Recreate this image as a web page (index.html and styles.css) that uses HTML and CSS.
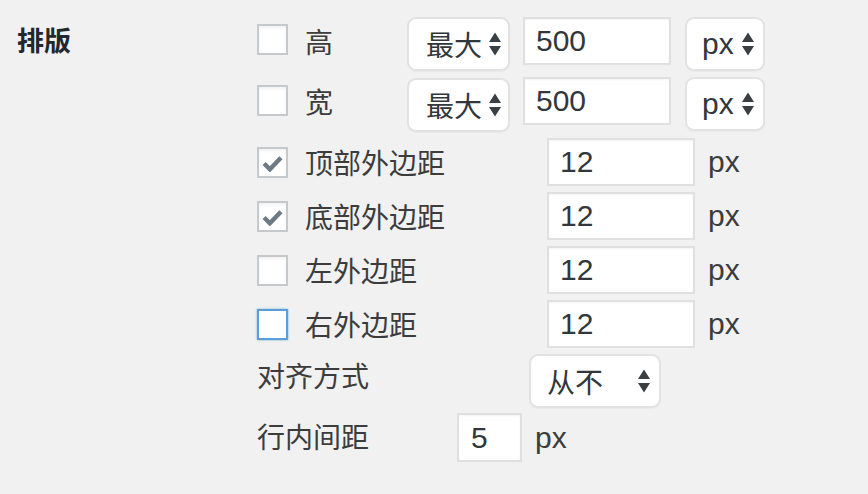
FILE: index.html
```html
<!DOCTYPE html>
<html lang="zh">
<head>
<meta charset="utf-8">
<link rel="stylesheet" href="styles.css">
</head>
<body>
<div class="section">
  <div class="heading">排版</div>
  <div class="fields">
    <div class="row row-size">
      <span class="cb"></span>
      <span class="label label-short">高</span>
      <span class="select select-max">最大<svg class="arrows" viewBox="0 0 12 24"><path d="M6 0.5 L12 10 L0 10 Z M0 14 L12 14 L6 23.5 Z"/></svg></span>
      <span class="input input-wide">500</span>
      <span class="select select-unit"><span class="latin">px</span><svg class="arrows" viewBox="0 0 12 24"><path d="M6 0.5 L12 10 L0 10 Z M0 14 L12 14 L6 23.5 Z"/></svg></span>
    </div>
    <div class="row row-size row-size2">
      <span class="cb"></span>
      <span class="label label-short">宽</span>
      <span class="select select-max">最大<svg class="arrows" viewBox="0 0 12 24"><path d="M6 0.5 L12 10 L0 10 Z M0 14 L12 14 L6 23.5 Z"/></svg></span>
      <span class="input input-wide">500</span>
      <span class="select select-unit"><span class="latin">px</span><svg class="arrows" viewBox="0 0 12 24"><path d="M6 0.5 L12 10 L0 10 Z M0 14 L12 14 L6 23.5 Z"/></svg></span>
    </div>
    <div class="row row-margin row-first-margin">
      <span class="cb checked"><svg class="tick" viewBox="0 0 20 16"><path d="M2 8 L7.5 13.5 L18 2.5"/></svg></span>
      <span class="label label-long">顶部外边距</span>
      <span class="input input-wide">12</span>
      <span class="unit">px</span>
    </div>
    <div class="row row-margin">
      <span class="cb checked"><svg class="tick" viewBox="0 0 20 16"><path d="M2 8 L7.5 13.5 L18 2.5"/></svg></span>
      <span class="label label-long">底部外边距</span>
      <span class="input input-wide">12</span>
      <span class="unit">px</span>
    </div>
    <div class="row row-margin">
      <span class="cb"></span>
      <span class="label label-long">左外边距</span>
      <span class="input input-wide">12</span>
      <span class="unit">px</span>
    </div>
    <div class="row row-margin">
      <span class="cb focused"></span>
      <span class="label label-long">右外边距</span>
      <span class="input input-wide">12</span>
      <span class="unit">px</span>
    </div>
    <div class="row row-align">
      <span class="label label-plain">对齐方式</span>
      <span class="select select-align">从不<svg class="arrows" viewBox="0 0 12 24"><path d="M6 0.5 L12 10 L0 10 Z M0 14 L12 14 L6 23.5 Z"/></svg></span>
    </div>
    <div class="row row-spacing">
      <span class="label label-spacing">行内间距</span>
      <span class="input input-small">5</span>
      <span class="unit">px</span>
    </div>
  </div>
</div>
</body>
</html>
```

FILE: styles.css
```css
html, body {
  margin: 0;
  padding: 0;
  background: #f1f1f1;
}
body {
  font-family: "Liberation Sans", "Noto Sans CJK SC", sans-serif;
  color: #444;
  font-size: 28px;
}
.section {
  display: flex;
  padding-top: 17px;
}
.heading {
  width: 257px;
  flex: none;
  padding-left: 17px;
  box-sizing: border-box;
  font-weight: bold;
  color: #23282d;
  font-size: 27px;
  line-height: 54px;
  margin-top: -2px;
}
.fields {
  display: flex;
  flex-direction: column;
}
.row {
  display: flex;
  align-items: flex-start;
}
.cb {
  width: 31px;
  height: 31px;
  box-sizing: border-box;
  border: 2px solid #c6c9cc;
  background: #fff;
  box-shadow: inset 0 2px 3px rgba(0,0,0,0.06);
  display: flex;
  align-items: center;
  justify-content: center;
  flex: none;
  margin-right: 17px;
}
.cb.focused {
  border-color: #5b9dd9;
  box-shadow: 0 0 2px rgba(30,140,190,0.6);
}
.tick {
  width: 21px;
  height: 17px;
  fill: none;
  stroke: #6b7a85;
  stroke-width: 4.2;
  margin-top: 1px;
}
.label {
  line-height: 54px;
  color: #3c3c3c;
  flex: none;
}
.label-short { width: 102px; }
.label-long { width: 242px; }
.label-plain { width: 272px; }
.label-spacing { width: 200px; }
.latin {
  font-size: 30px;
}
.select {
  box-sizing: border-box;
  height: 54px;
  background: #fff;
  border: 2px solid #e2e2e2;
  border-radius: 9px;
  display: flex;
  align-items: center;
  color: #32373c;
  flex: none;
  box-shadow: 0 1px 1px rgba(0,0,0,0.03);
}
.arrows {
  width: 12px;
  height: 24px;
  fill: #3a3f44;
  margin-left: auto;
}
.select-max {
  width: 103px;
  padding: 0 7px 0 17px;
  margin-right: 13px;
}
.select-unit {
  width: 80px;
  padding: 0 9px 0 15px;
  margin-left: 14px;
}
.select-align {
  width: 132px;
  padding: 0 9px 0 16px;
  margin-top: 0;
}
.input {
  box-sizing: border-box;
  height: 48px;
  background: #fff;
  border: 2px solid #e0e0e0;
  box-shadow: inset 0 1px 2px rgba(0,0,0,0.05);
  color: #32373c;
  font-size: 30px;
  display: flex;
  align-items: center;
  flex: none;
}
.input-wide {
  width: 148px;
  padding-left: 11px;
}
.input-small {
  width: 65px;
  height: 49px;
  padding-left: 12px;
}
.unit {
  font-size: 30px;
  line-height: 48px;
  color: #3c3c3c;
  margin-left: 13px;
}
.row-size {
  height: 54px;
}
.row-size .cb { margin-top: 7px; }
.row-size2 { margin-top: 6px; }
.row-size2 .cb { margin-top: 8px; }
.row-size2 .select-max { margin-top: 1px; }
.row-margin {
  height: 48px;
  margin-top: 6px;
}
.row-first-margin { margin-top: 7px; }
.row-margin .cb { margin-top: 9px; }
.row-margin .label { line-height: 54px; }
.row-align {
  margin-top: 6px;
  height: 54px;
}
.row-align .label-plain { line-height: 48px; }
.row-spacing {
  margin-top: 5px;
}
.row-spacing .label { line-height: 52px; }
.row-spacing .unit { line-height: 50px; margin-left: 13px; }
```
